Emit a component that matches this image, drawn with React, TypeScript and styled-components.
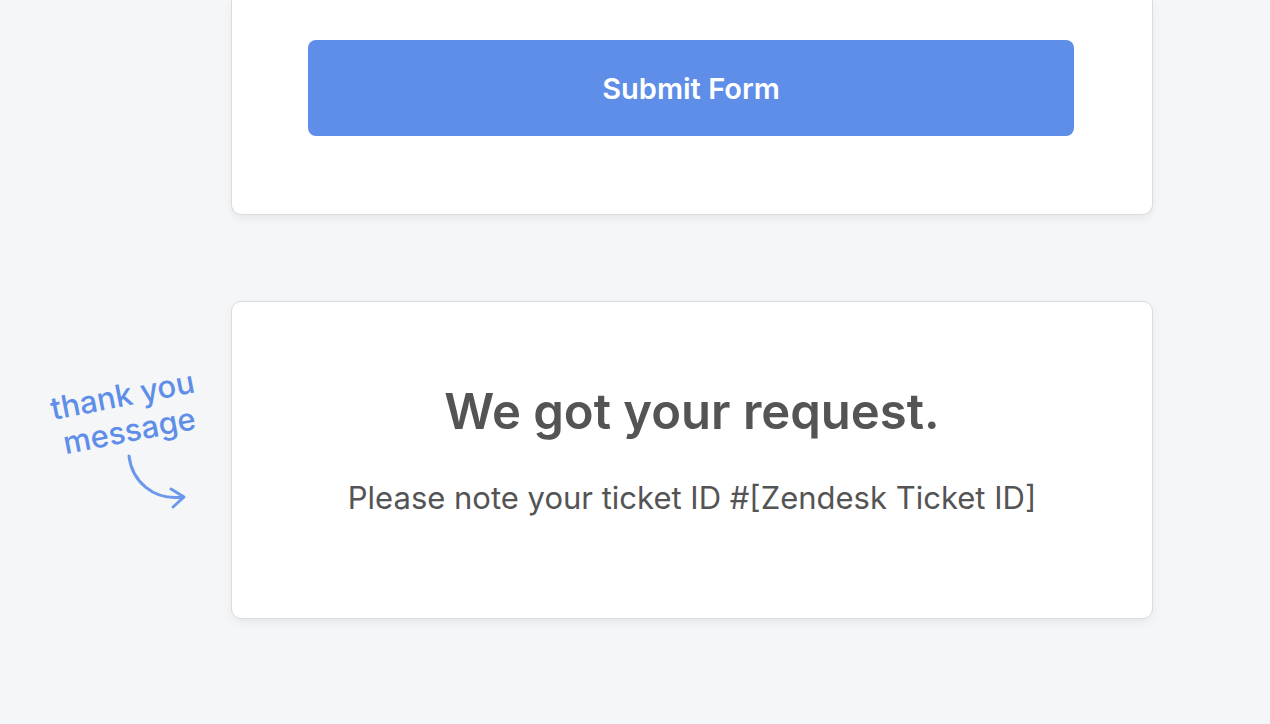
import React from "react";
import styled, { createGlobalStyle } from "styled-components";

const GlobalStyle = createGlobalStyle`
  * { box-sizing: border-box; }
  body {
    margin: 0;
    background: #f5f6f8;
    color: #545454;
    font-family: Inter, "Liberation Sans", sans-serif;
  }
`;

const Page = styled.main`
  display: grid;
  grid-template-columns: 231px minmax(0, 1fr);
  row-gap: 86px;
  padding: 0 117px 104px 0;
`;

const Card = styled.section<{ $continued?: boolean }>`
  grid-column: 2;
  background: #fff;
  border: 1px solid #d9dbdf;
  border-top-width: ${(p) => (p.$continued ? "0" : "1px")};
  border-radius: ${(p) => (p.$continued ? "0 0 10px 10px" : "10px")};
  padding: ${(p) => (p.$continued ? "40px 78px 78px 76px" : "78px 76px 98px")};
  box-shadow: 0 4px 12px -2px rgba(0, 0, 0, 0.08);
  text-align: center;
`;

const SubmitButton = styled.button`
  display: block;
  width: 100%;
  height: 96px;
  padding: 2px 0 0;
  border: 0;
  border-radius: 8px;
  background: #5e8ee8;
  color: #fff;
  font: 600 29px/40px Inter, "Liberation Sans", sans-serif;
  cursor: pointer;
`;

const Title = styled.h1`
  margin: 0 0 32px;
  font-size: 49px;
  font-weight: 600;
  line-height: 64px;
`;

const Message = styled.p`
  margin: 0;
  font-size: 31px;
  line-height: 44px;
`;

const Note = styled.aside`
  grid-column: 1;
  display: flex;
  flex-direction: column;
  align-items: center;
  padding: 76px 0 0 20px;
  color: #5e8ee8;
`;

const NoteText = styled.p`
  margin: 0;
  font-size: 31px;
  font-weight: 500;
  line-height: 36px;
  text-align: center;
  transform: rotate(-11deg);
`;

const Arrow = styled.svg`
  display: block;
  margin: 4px 0 0 62px;
`;

export default function App() {
  return (
    <>
      <GlobalStyle />
      <Page>
        <Card $continued>
          <SubmitButton type="button">Submit Form</SubmitButton>
        </Card>
        <Note>
          <NoteText>
            thank you
            <br />
            message
          </NoteText>
          <Arrow width="62" height="58" viewBox="0 0 62 58" fill="none" stroke="#6c98ec" strokeWidth="3" strokeLinecap="round" strokeLinejoin="round" aria-hidden="true">
            <path d="M3 3C6 28 27 48 57 44" />
            <path d="M45 36L58 44L47 54" />
          </Arrow>
        </Note>
        <Card>
          <Title>We got your request.</Title>
          <Message>Please note your ticket ID #[Zendesk Ticket ID]</Message>
        </Card>
      </Page>
    </>
  );
}
